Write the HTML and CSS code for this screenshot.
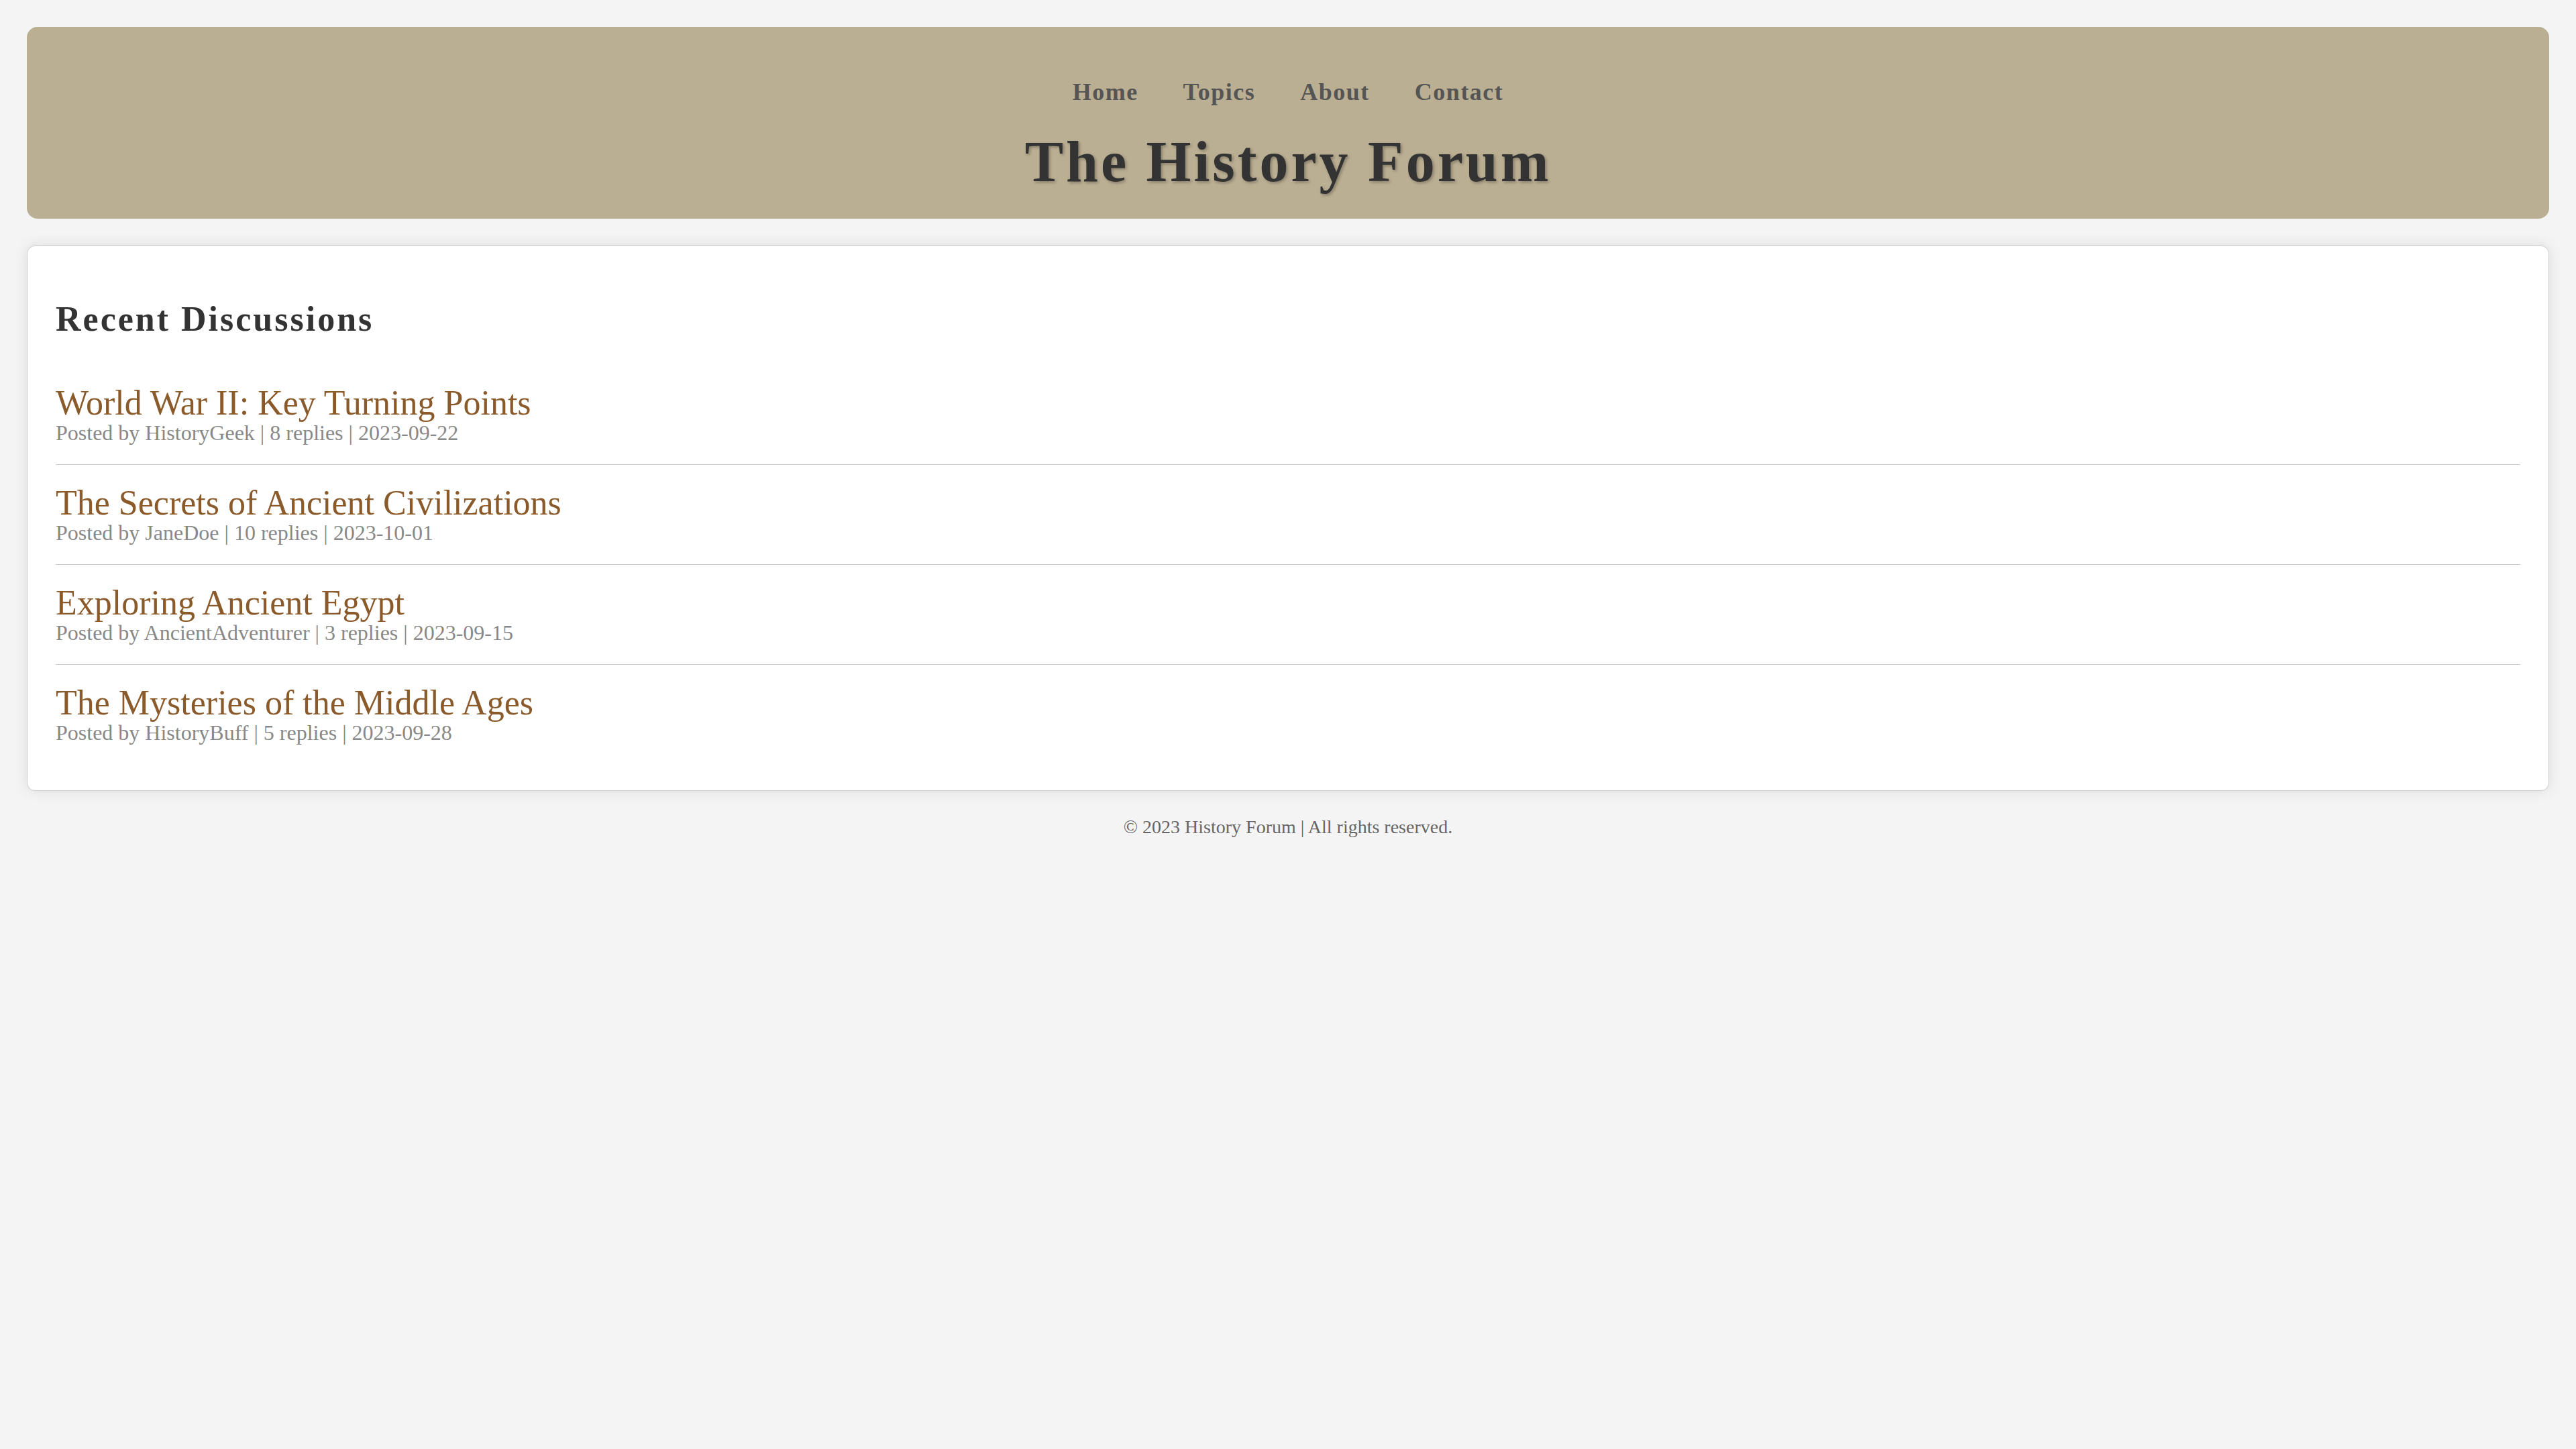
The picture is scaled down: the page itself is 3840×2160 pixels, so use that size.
FILE: index.html
```html
<!DOCTYPE html>
<html lang="en">
<head>
<meta charset="utf-8">
<title>The History Forum</title>
<link rel="stylesheet" href="styles.css">
</head>
<body>
<header class="site-header">
  <nav class="nav">
    <a class="nav-link" href="#">Home</a>
    <a class="nav-link" href="#">Topics</a>
    <a class="nav-link" href="#">About</a>
    <a class="nav-link" href="#">Contact</a>
  </nav>
  <h1 class="site-title">The History Forum</h1>
</header>
<main class="card">
  <h2 class="section-title">Recent Discussions</h2>
  <ul class="topics">
    <li class="topic">
      <a class="topic-title" href="#">World War II: Key Turning Points</a>
      <p class="topic-meta">Posted by HistoryGeek | 8 replies | 2023-09-22</p>
    </li>
    <li class="topic">
      <a class="topic-title" href="#">The Secrets of Ancient Civilizations</a>
      <p class="topic-meta">Posted by JaneDoe | 10 replies | 2023-10-01</p>
    </li>
    <li class="topic">
      <a class="topic-title" href="#">Exploring Ancient Egypt</a>
      <p class="topic-meta">Posted by AncientAdventurer | 3 replies | 2023-09-15</p>
    </li>
    <li class="topic">
      <a class="topic-title" href="#">The Mysteries of the Middle Ages</a>
      <p class="topic-meta">Posted by HistoryBuff | 5 replies | 2023-09-28</p>
    </li>
  </ul>
</main>
<footer class="site-footer">© 2023 History Forum | All rights reserved.</footer>
</body>
</html>
```
FILE: styles.css
```css
* { box-sizing: border-box; }

html, body {
  margin: 0;
}

body {
  padding: 40px;
  background: #f4f4f4;
  font-family: "Liberation Serif", "DejaVu Serif", serif;
  color: #333;
}

.site-header {
  background: #bbaf93;
  border-radius: 16px;
  padding: 77px 40px 35px;
  text-align: center;
}

.nav {
  display: flex;
  justify-content: center;
  gap: 67px;
  margin-bottom: 34px;
}

.nav-link {
  font-size: 36px;
  line-height: 40px;
  font-weight: bold;
  letter-spacing: 1.5px;
  color: #555;
  text-decoration: none;
}

.site-title {
  margin: 0;
  font-size: 86px;
  line-height: 100px;
  font-weight: bold;
  letter-spacing: 4px;
  color: #333;
  text-shadow: 2px 2px 4px rgba(0, 0, 0, 0.3);
}

.card {
  display: block;
  margin-top: 40px;
  background: #fff;
  border: 1px solid #ccc;
  border-radius: 12px;
  box-shadow: 0 0 20px rgba(0, 0, 0, 0.1);
  padding: 40px 42px 39px;
}

.section-title {
  margin: 39px 0 38px;
  font-size: 52px;
  line-height: 60px;
  font-weight: bold;
  letter-spacing: 3px;
  color: #333;
}

.topics {
  list-style: none;
  margin: 0;
  padding: 0;
}

.topic {
  padding: 31px 0;
  border-bottom: 1px solid #ccc;
}

.topic:last-child {
  border-bottom: none;
}

.topic-title {
  display: block;
  font-size: 52px;
  line-height: 52px;
  color: #8b5a2b;
  text-decoration: none;
}

.topic-meta {
  margin: 2px 0 0;
  font-size: 32px;
  line-height: 32px;
  color: #888;
}

.site-footer {
  margin-top: 38px;
  text-align: center;
  font-size: 28px;
  line-height: 32px;
  color: #666;
}
```
